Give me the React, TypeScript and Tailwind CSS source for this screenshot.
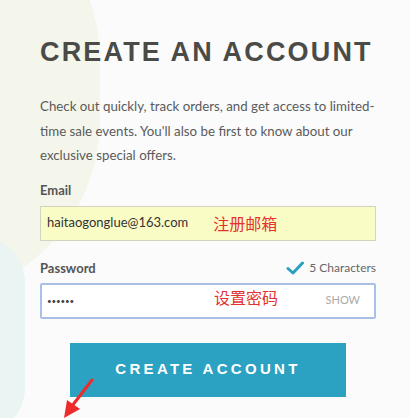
import React from "react";

const App = () => {
  return (
    <div className="relative w-[410px] h-[418px] overflow-hidden bg-[#fbfbfc] font-['Lato','Liberation_Sans',sans-serif]">
      {/* soft background shapes */}
      <div className="absolute -left-[260px] -top-[120px] w-[360px] h-[420px] rounded-full bg-[#f4f6ec]" />
      <div className="absolute -left-[70px] top-[235px] w-[95px] h-[200px] rounded-full bg-[#e9f4f3]" />

      <div className="relative px-[40px] pt-[36px] w-[336px] box-content">
        <h1 className="text-[27px] leading-[32px] font-semibold tracking-[0.08em] text-[#4a4b47] font-['Liberation_Sans',sans-serif] whitespace-nowrap">
          CREATE AN ACCOUNT
        </h1>

        <p className="mt-[26px] text-[13.3px] leading-[24.5px] text-[#5a5a5a]">
          Check out quickly, track orders, and get access to limited-time sale events. You'll also be first to know about our exclusive special offers.
        </p>

        <form className="mt-[12px] flex flex-col">
          <label className="text-[13px] font-bold text-[#555] leading-[20px]">Email</label>
          <div className="mt-[6px] h-[35px] flex items-center border border-[#d3d3c0] bg-[#fafcc6] px-[6px]">
            <span className="text-[13px] text-[#333]">haitaogonglue@163.com</span>
            <span className="ml-[25px] text-[16px] text-[#e5322d] font-['Noto_Sans_CJK_SC',sans-serif]">注册邮箱</span>
          </div>

          <div className="mt-[17px] flex items-center justify-between leading-[20px]">
            <label className="text-[13px] font-bold text-[#555]">Password</label>
            <span className="flex items-center gap-[5px] text-[12px] text-[#666]">
              <svg width="18" height="14" viewBox="0 0 18 14">
                <path d="M2 7.5 L7 12 L16.5 2" fill="none" stroke="#2b9fc0" strokeWidth="3" strokeLinecap="round" strokeLinejoin="round" />
              </svg>
              5 Characters
            </span>
          </div>
          <div className="mt-[5px] h-[36px] flex items-center border-2 border-[#a9bfe6] rounded-[2px] bg-white pl-[5px] pr-[14px]">
            <span className="text-[8px] text-[#444] tracking-[-0.02em]">••••••</span>
            <span className="ml-[140px] -mt-[8px] text-[16px] text-[#e5322d] font-['Noto_Sans_CJK_SC',sans-serif]">设置密码</span>
            <span className="ml-auto text-[11px] text-[#aaa]">SHOW</span>
          </div>
        </form>

        <div className="mt-[24px] pl-[30px]">
          <button className="w-[276px] h-[54px] bg-[#2ba2c1] text-white text-[15px] font-bold tracking-[0.22em] font-['Liberation_Sans',sans-serif]">
            CREATE ACCOUNT
          </button>
        </div>
      </div>

      {/* red arrow annotation */}
      <svg className="absolute left-[58px] top-[376px]" width="40" height="42" viewBox="0 0 40 42">
        <path d="M34 4 L14 30" stroke="#ee2b2b" strokeWidth="3" strokeLinecap="round" />
        <path d="M6 42 L9 24 L22 33 Z" fill="#ee2b2b" />
      </svg>
    </div>
  );
};

export default App;
